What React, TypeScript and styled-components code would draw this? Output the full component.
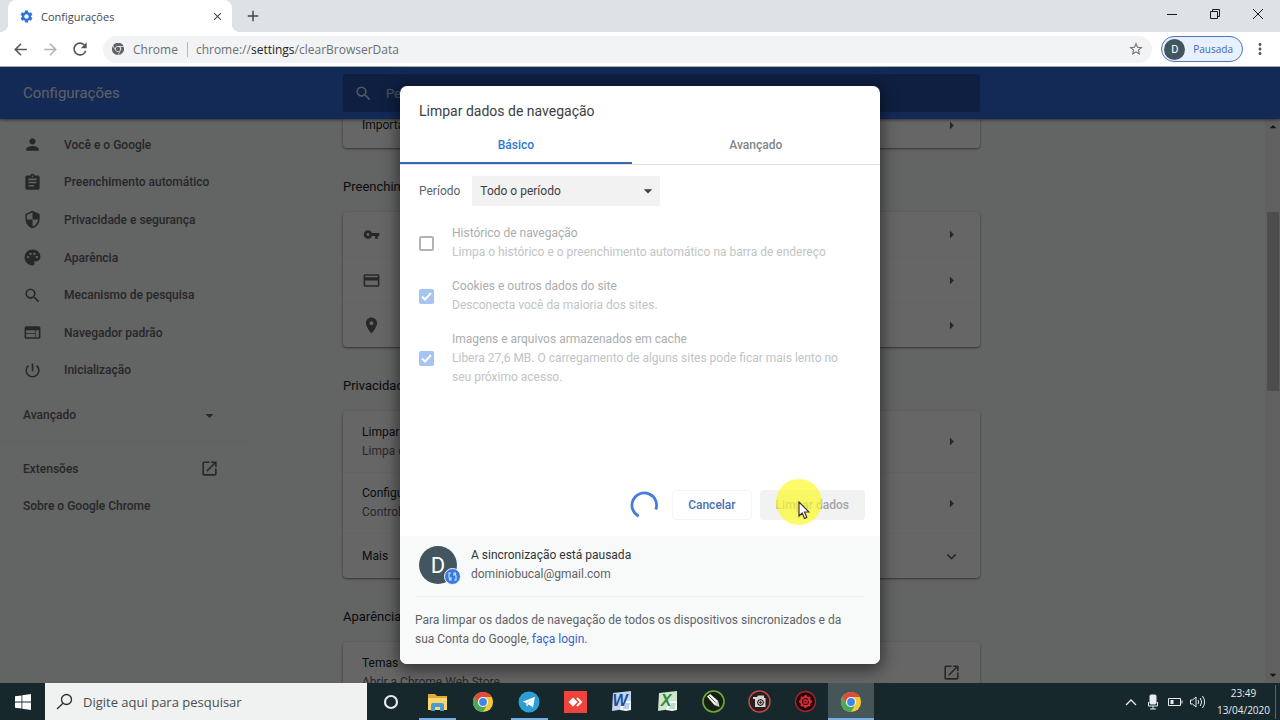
import React from "react";
import styled, { createGlobalStyle, css } from "styled-components";
import {
  MdAdd,
  MdArrowBack,
  MdArrowDropDown,
  MdArrowDropUp,
  MdArrowForward,
  MdArrowRight,
  MdAssignment,
  MdClose,
  MdCreditCard,
  MdExpandMore,
  MdMoreVert,
  MdOpenInNew,
  MdPalette,
  MdPerson,
  MdPlace,
  MdPowerSettingsNew,
  MdRefresh,
  MdSearch,
  MdSecurity,
  MdSettings,
  MdStarBorder,
  MdVpnKey,
  MdWeb,
} from "react-icons/md";

const systemFont = '"Segoe UI", "Open Sans", "Noto Sans", sans-serif';
const pageFont = 'Roboto, "Liberation Sans", sans-serif';

const GlobalStyle = createGlobalStyle`
  *, *::before, *::after { box-sizing: border-box; }
  body { margin: 0; background: #17272b; }
  button, input, select { font: inherit; color: inherit; }
  button { border: 0; padding: 0; background: none; }
  a { color: inherit; text-decoration: none; }
  h1, h2, p, ul { margin: 0; padding: 0; font-weight: inherit; font-size: inherit; }
  ul { list-style: none; }
  svg { display: block; flex: none; }
`;

const Desktop = styled.div`
  display: flex;
  flex-direction: column;
  height: 100vh;
  overflow: hidden;
  font-family: ${pageFont};
  font-size: 12px;
`;

/* ---------- browser frame ---------- */

const TabStrip = styled.header`
  display: flex;
  flex: none;
  height: 32px;
  padding-left: 8px;
  background: #dee1e5;
  font-family: ${systemFont};
  font-size: 11px;
  color: #45494d;
`;

const BrowserTab = styled.div`
  position: relative;
  display: flex;
  align-items: center;
  gap: 7px;
  width: 224px;
  padding: 0 8px 0 11px;
  border-radius: 8px 8px 0 0;
  background: #fff;

  &::before,
  &::after {
    content: "";
    position: absolute;
    bottom: 0;
    width: 8px;
    height: 8px;
  }
  &::before {
    right: 100%;
    background: radial-gradient(circle at 0 0, transparent 8px, #fff 8px);
  }
  &::after {
    left: 100%;
    background: radial-gradient(circle at 100% 0, transparent 8px, #fff 8px);
  }
`;

const TabTitle = styled.span`
  flex: 1;
`;

const IconButton = styled.button<{ $width?: number }>`
  display: flex;
  flex: none;
  align-items: center;
  justify-content: center;
  width: ${(p) => p.$width ?? 30}px;
  color: inherit;
`;

const WindowControls = styled.div`
  display: flex;
  height: 27px;
  margin-left: auto;
  padding-right: 1px;
  color: #1b1b1b;
`;

const Toolbar = styled.div`
  display: flex;
  flex: none;
  align-items: center;
  height: 35px;
  padding: 0 5px;
  border-bottom: 1px solid #a9adb3;
  background: #fff;
  font-family: ${systemFont};
  font-size: 12px;
  color: #55595d;
`;

const Omnibox = styled.div`
  display: flex;
  flex: 1;
  align-items: center;
  height: 27px;
  margin: 0 9px 0 8px;
  padding: 0 8px 0 9px;
  border-radius: 14px;
  background: #f1f3f4;
  color: #6b6f73;
`;

const SiteChip = styled.span`
  margin-left: 9px;
  padding-right: 9px;
  border-right: 1px solid #b5b8bb;
  line-height: 15px;
`;

const Address = styled.span`
  flex: 1;
  padding-left: 8px;

  b {
    font-weight: 400;
    color: #202124;
  }
`;

const ProfileChip = styled.button`
  display: flex;
  align-items: center;
  gap: 8px;
  height: 26px;
  margin-right: 2px;
  padding: 0 9px 0 2px;
  border: 1px solid #4c78b8;
  border-radius: 13px;
  background: #e8f0fd;
  font-size: 10px;
  color: #3b69b5;
`;

const Initial = styled.span<{ $size: number }>`
  display: flex;
  flex: none;
  align-items: center;
  justify-content: center;
  width: ${(p) => p.$size}px;
  height: ${(p) => p.$size}px;
  border-radius: 50%;
  background: #43565f;
  color: #fff;
  font-family: ${pageFont};
  font-size: ${(p) => (p.$size > 30 ? 22 : 11)}px;
`;

/* ---------- settings page ---------- */

const Page = styled.div`
  position: relative;
  display: flex;
  flex: 1;
  flex-direction: column;
  min-height: 0;
  overflow: hidden;
  background: #f8f9fa;
`;

const columns = css`
  display: grid;
  grid-template-columns: minmax(250px, 1fr) minmax(0, 637px) 285px;
`;

const PageHeader = styled.div`
  ${columns}
  flex: none;
  z-index: 1;
  align-items: center;
  height: 52px;
  padding-right: 15px;
  background: #3067d8;
  box-shadow: 0 1px 3px rgba(0, 0, 0, 0.5);
  color: #fff;
`;

const PageTitle = styled.h1`
  padding-left: 23px;
  font-size: 15px;
  opacity: 0.9;
`;

const SearchField = styled.label`
  display: flex;
  align-items: center;
  gap: 13px;
  height: 38px;
  padding: 0 11px;
  border-radius: 2px;
  background: rgba(0, 0, 0, 0.24);

  svg {
    opacity: 0.8;
  }
  input {
    flex: 1;
    min-width: 0;
    padding: 0;
    border: 0;
    outline: 0;
    background: none;
    font-size: 13px;
  }
  input::placeholder {
    color: #fff;
    opacity: 0.7;
  }
`;

const PageBody = styled.div`
  display: flex;
  flex: 1;
  min-height: 0;
`;

const PageColumns = styled.div`
  ${columns}
  flex: 1;
  overflow: hidden;
`;

const Sidebar = styled.nav`
  width: 250px;
  padding-top: 7px;
  font-weight: 500;
  color: #5f6368;
`;

const MenuList = styled.ul<{ $height?: number }>`
  display: flex;
  flex-direction: column;
  height: ${(p) => (p.$height ? `${p.$height}px` : "auto")};

  li {
    display: flex;
    flex: 1 0 auto;
  }
`;

const MenuLink = styled.a`
  display: flex;
  flex: 1;
  align-items: center;
  gap: 22px;
  min-height: 37px;
  padding-left: 23px;
`;

const MenuToggle = styled.button`
  display: flex;
  align-items: center;
  justify-content: space-between;
  width: 100%;
  height: 38px;
  margin: 7px 0;
  padding: 0 31px 0 23px;
  font-weight: 500;
`;

const MenuFooter = styled(MenuList)`
  padding-top: 8px;
  border-top: 1px solid #f0f1f3;

  ${MenuLink} {
    justify-content: space-between;
    min-height: 37px;
    padding-right: 31px;
  }
`;

const Main = styled.main`
  margin-top: -16px;
  color: #202124;
`;

const SectionTitle = styled.h2`
  display: flex;
  align-items: center;
  height: 64px;
  padding-top: 12px;
  font-size: 13px;
`;

const Card = styled.div`
  border-radius: 4px;
  background: #fff;
  box-shadow: 0 1px 2px rgba(60, 64, 67, 0.5), 0 1px 3px rgba(60, 64, 67, 0.2);
`;

const CardRow = styled.a<{ $tall?: boolean }>`
  display: flex;
  align-items: center;
  gap: 18px;
  height: ${(p) => (p.$tall ? 61 : 45)}px;
  padding: 0 19px;
  line-height: 19px;

  & + & {
    border-top: 1px solid #f7f7f8;
  }
  > svg {
    color: #5f6368;
  }
`;

const RowIcon = styled.span`
  display: flex;
  flex: 1;
  color: #5f6368;
`;

const IconSlot = styled.span`
  display: flex;
  justify-content: center;
  width: 19px;
`;

const RowText = styled.span`
  flex: 1;

  small {
    display: block;
    font-size: 12px;
    color: #5f6368;
  }
`;

const Scrollbar = styled.div`
  display: flex;
  flex-direction: column;
  align-items: center;
  justify-content: space-between;
  width: 15px;
  background: #f1f1f1;
  color: #303030;
`;

const ScrollTrack = styled.div`
  flex: 1;
  width: 12px;
  padding-top: 77px;
`;

const ScrollThumb = styled.div`
  height: 179px;
  background: #c1c1c1;
`;

/* ---------- dialog ---------- */

const Backdrop = styled.div`
  position: absolute;
  inset: 0;
  z-index: 2;
  display: flex;
  align-items: center;
  justify-content: center;
  background: rgba(0, 0, 0, 0.6);
`;

const Dialog = styled.section`
  width: 480px;
  overflow: hidden;
  border-radius: 7px;
  background: #fefffe;
  box-shadow: 0 4px 16px 2px rgba(0, 0, 0, 0.5);
  line-height: 19px;
  color: #5f6368;
`;

const DialogTitle = styled.h2`
  padding: 16px 19px 0;
  font-size: 14px;
  color: #3c4043;
`;

const TabBar = styled.div`
  display: flex;
  height: 44px;
  border-bottom: 1px solid #dcdedd;
`;

const DialogTab = styled.button<{ $active?: boolean }>`
  flex: 1 1 auto;
  padding: 8px 0 0;
  border-bottom: 2px solid ${(p) => (p.$active ? "#3868b4" : "transparent")};
  font-weight: 500;
  color: ${(p) => (p.$active ? "#2f78d8" : "#80868b")};
`;

const DialogBody = styled.div`
  min-height: 309px;
  padding: 11px 19px 0;
`;

const PeriodRow = styled.div`
  display: flex;
  align-items: center;
  gap: 12px;
  margin-bottom: 18px;
`;

const SelectBox = styled.span`
  position: relative;
  width: 188px;
  height: 30px;
  color: #3c4043;

  select {
    width: 100%;
    height: 100%;
    padding: 0 8px;
    border: 0;
    border-radius: 2px;
    appearance: none;
    background: #f1f2f1;
  }
  svg {
    position: absolute;
    top: 5px;
    right: 2px;
    pointer-events: none;
  }
`;

const OptionList = styled.div`
  display: flex;
  flex-direction: column;
  gap: 15px;
  padding-right: 15px;
`;

const Option = styled.label`
  display: flex;
  align-items: center;
  gap: 18px;
  color: #abadae;

  small {
    display: block;
    font-size: 12px;
    color: #c2c4c5;
  }
`;

const CheckSlot = styled.span`
  display: grid;
  flex: none;
  width: 15px;
  height: 15px;

  input,
  svg {
    grid-area: 1 / 1;
    width: 15px;
    height: 15px;
    margin: 0;
  }
  input {
    appearance: none;
    border: 2px solid #b2b4b4;
    border-radius: 2px;
  }
  input:checked {
    border: 0;
    background: #a6c3f1;
  }
`;

const Actions = styled.div`
  display: flex;
  align-items: center;
  justify-content: flex-end;
  padding: 16px 15px;
`;

const ActionButton = styled.button<{ $primary?: boolean }>`
  position: relative;
  height: 30px;
  margin-left: ${(p) => (p.$primary ? 8 : 14)}px;
  padding: 0 ${(p) => (p.$primary ? 16 : 15)}px;
  border: ${(p) => (p.$primary ? "0" : "1px solid #f4f6f6")};
  border-radius: 4px;
  background: ${(p) => (p.$primary ? "#f1f2f2" : "transparent")};
  font-weight: 500;
  color: ${(p) => (p.$primary ? "#a3a5a7" : "#4a70b4")};
`;

const ClickHalo = styled.span`
  position: absolute;
  top: -11px;
  left: 16px;
  width: 46px;
  height: 46px;
  border-radius: 50%;
  background: rgba(252, 250, 40, 0.7);

  svg {
    position: absolute;
    top: 22px;
    left: 22px;
  }
`;

const DialogFooter = styled.footer`
  padding: 10px 15px 15px;
  background: #f8faf9;

  p {
    padding-right: 10px;
  }
`;

const Account = styled.div`
  display: flex;
  align-items: center;
  gap: 14px;
  padding: 0 4px 12px;
  border-bottom: 1px solid #eceeed;
  margin-bottom: 14px;

  strong {
    display: block;
    font-weight: 400;
    color: #303336;
  }
`;

const Avatar = styled.span`
  position: relative;

  > svg {
    position: absolute;
    right: -4px;
    bottom: -1px;
  }
`;

const LoginLink = styled.a`
  color: #3a5fd0;
`;

/* ---------- taskbar ---------- */

const Taskbar = styled.footer`
  display: flex;
  flex: none;
  height: 37px;
  background: #17282c;
  font-family: ${systemFont};
  color: #e8ecec;
`;

const TaskSearch = styled.label`
  display: flex;
  align-items: center;
  gap: 10px;
  width: 322px;
  padding: 0 11px;
  background: #f0f2f1;
  color: #3c3f40;

  input {
    flex: 1;
    min-width: 0;
    padding: 0;
    border: 0;
    outline: 0;
    background: none;
    font-size: 13px;
  }
  input::placeholder {
    color: #4b4e4f;
    opacity: 1;
  }
`;

const TaskList = styled.div`
  display: flex;
  padding-left: 1px;
`;

const TaskButton = styled.button<{ $open?: boolean; $active?: boolean }>`
  position: relative;
  display: flex;
  align-items: center;
  justify-content: center;
  width: 46px;
  background: ${(p) => (p.$active ? "#465557" : "transparent")};

  &::after {
    content: "";
    position: absolute;
    bottom: 0;
    left: ${(p) => (p.$active ? 0 : 5)}px;
    right: ${(p) => (p.$active ? 0 : 4)}px;
    height: 2px;
    background: ${(p) => (p.$open ? "#78aee4" : "transparent")};
  }
`;

const Tray = styled.div`
  display: flex;
  align-items: center;
  margin-left: auto;
  padding-right: 4px;
`;

const Clock = styled.time`
  padding: 0 5px 0 9px;
  border-right: 1px solid #5c696c;
  font-size: 10px;
  line-height: 17px;
  text-align: center;
  white-space: pre-line;
`;

/* ---------- drawings ---------- */

const ChromeMono = () => (
  <svg width="12" height="12" viewBox="0 0 24 24" fill="#5f6368">
    <path d="M12 6h11A12 12 0 0 0 2 5.200l4.300 7.200A6 6 0 0 1 12 6z" />
    <path d="M1.200 6.500A12 12 0 0 0 11 24l4.300-7.500a6 6 0 0 1-8.300-1.500z" />
    <path d="M16.500 7.500a6 6 0 0 1 .7 7.500L12.500 24A12 12 0 0 0 23.200 7.500z" />
    <circle cx="12" cy="12" r="4.500" />
  </svg>
);

const ChromeLogo = () => (
  <svg width="22" height="22" viewBox="0 0 48 48">
    <circle cx="24" cy="24" r="22" fill="#f6c935" />
    <path d="M4.950 13A22 22 0 0 1 43.050 13H24a11 11 0 0 0-9.500 16.500z" fill="#dd4b3e" />
    <path d="M4.950 13A22 22 0 0 0 24 46l9.500-16.500a11 11 0 0 1-19 0z" fill="#4ba85a" />
    <circle cx="24" cy="24" r="11" fill="#f4f4f4" />
    <circle cx="24" cy="24" r="8.500" fill="#4285e8" />
  </svg>
);

const WindowsLogo = () => (
  <svg width="16" height="16" viewBox="0 0 16 16" fill="#fff">
    <path d="M0 2.300 6.500 1.400V7.600H0zM7.300 1.300 16 0V7.600H7.300zM0 8.400H6.500V14.600L0 13.700zM7.300 8.400H16V16L7.300 14.700z" />
  </svg>
);

const ExplorerIcon = () => (
  <svg width="21" height="18" viewBox="0 0 21 18">
    <path d="M1 1h7l2 2h10v14H1z" fill="#e0a83a" />
    <path d="M1 5h19v12H1z" fill="#fbd76c" />
    <path d="M4 18v-6q0-2 2-2h9q2 0 2 2v6h-4v-4H8v4z" fill="#4a9bd0" />
  </svg>
);

const TelegramIcon = () => (
  <svg width="22" height="22" viewBox="0 0 22 22">
    <circle cx="11" cy="11" r="10.500" fill="#2c9ed6" />
    <path d="M4.500 10.800 17 5.700 15 16.500l-4.200-3-2 2-.5-3.500z" fill="#fff" />
    <path d="m8.300 12 6-4.300-4.700 5-.8 2.800z" fill="#c5dcea" />
  </svg>
);

const AnyDeskIcon = () => (
  <svg width="23" height="22" viewBox="0 0 23 22">
    <path d="M0 0h23v22H0z" fill="#ef443b" />
    <path d="m9 6.500 4.500 4.500L9 15.500 4.500 11z" fill="#fff" />
    <path d="m13 7 4 4-4 4" fill="none" stroke="#fff" strokeWidth="2" />
  </svg>
);

const OfficeIcon = ({ letter, color, tint }: { letter: string; color: string; tint: string }) => (
  <svg width="21" height="21" viewBox="0 0 21 21">
    <path d="M2 2 20 0v17L1 20z" fill={tint} />
    <path d="M11 10h9v9l-5 1-6-1z" fill="#f4f7fb" />
    <path d="M14 13h5M13 15h5M12 17h6" stroke={color} strokeOpacity=".5" />
    <text x="9" y="15" textAnchor="middle" fontFamily="Liberation Sans, sans-serif" fontWeight="700" fontStyle="italic" fontSize="16" fill={color}>
      {letter}
    </text>
  </svg>
);

const PenIcon = () => (
  <svg width="23" height="23" viewBox="0 0 23 23">
    <circle cx="11.500" cy="11.500" r="10.500" fill="#15200f" stroke="#6cab35" strokeWidth="1.600" />
    <path d="m5 6.500 3.200-2.500 8 7-3.700 4.300z" fill="#f4f4f4" />
    <path d="m16.200 11 1.300 6-5.500-2z" fill="#cfd3cf" />
    <path d="m7 6 6.500 6.500" stroke="#55604f" />
  </svg>
);

const CameraIcon = () => (
  <svg width="23" height="23" viewBox="0 0 23 23" fill="none">
    <circle cx="11.500" cy="11.500" r="10.500" fill="#2c1c20" stroke="#c24a4a" strokeWidth="1.500" />
    <path d="M5 9V7h4l1-1.500h6V8h1.500v9H7V9z" fill="#d8d4d4" />
    <circle cx="12.500" cy="12.500" r="4" fill="#2c1c20" stroke="#f4f4f4" />
    <circle cx="12.500" cy="12.500" r="1.800" stroke="#f4f4f4" />
  </svg>
);

const RecorderIcon = () => (
  <svg width="23" height="23" viewBox="0 0 23 23" fill="none">
    <circle cx="11.500" cy="11.500" r="10" fill="#24080b" stroke="#a8232a" strokeWidth="1.300" />
    <circle cx="11.500" cy="11.500" r="4.500" stroke="#dc2d33" strokeWidth="2" />
    <path
      d="M11.500 5v2M11.500 16v2M5 11.500h2M16 11.500h2M7 7l1.500 1.500M14.500 14.500 16 16M16 7l-1.500 1.500M7 16l1.500-1.500"
      stroke="#dc2d33"
      strokeWidth="2"
    />
    <path d="M13 10h-3v3h3v-2l3-2" stroke="#dc2d33" strokeWidth="1.300" />
  </svg>
);

const PointerIcon = () => (
  <svg width="12" height="19" viewBox="0 0 12 19">
    <path d="M1 1v14l3.200-3 2.300 5.500 2.300-1L6.500 11H11z" fill="#fff" stroke="#3a3430" strokeWidth="1.200" />
  </svg>
);

const Spinner = () => (
  <svg width="28" height="28" viewBox="0 0 28 28" role="img" aria-label="Limpando">
    <path d="M8.700 25.200A12.300 12.300 0 1 1 25.800 18.500" fill="none" stroke="#4a7bdc" strokeWidth="2.800" />
  </svg>
);

const SyncBadge = () => (
  <svg width="17" height="17" viewBox="0 0 17 17" fill="none">
    <circle cx="8.500" cy="8.500" r="8" fill="#3a7be0" stroke="#f4f8fb" />
    <path d="M7 5H5v4q0 2 2 3M5 12h2V9M10 12h2V8q0-2-2-3M12 5h-2v3" stroke="#cfe0f8" strokeWidth="1.100" />
  </svg>
);

const CheckMark = () => (
  <svg viewBox="0 0 15 15">
    <path d="m3 7.500 3 3 6-6.500" fill="none" stroke="#fff" strokeWidth="2" />
  </svg>
);

/* ---------- content ---------- */

const menu = [
  { icon: MdPerson, label: "Você e o Google" },
  { icon: MdAssignment, label: "Preenchimento automático" },
  { icon: MdSecurity, label: "Privacidade e segurança" },
  { icon: MdPalette, label: "Aparência" },
  { icon: MdSearch, label: "Mecanismo de pesquisa" },
  { icon: MdWeb, label: "Navegador padrão" },
  { icon: MdPowerSettingsNew, label: "Inicialização" },
];

const autofill = [
  { icon: MdVpnKey, size: 17, label: "Senhas" },
  { icon: MdCreditCard, size: 19, label: "Formas de pagamento" },
  { icon: MdPlace, size: 19, label: "Endereços e mais" },
];

const options = [
  {
    title: "Histórico de navegação",
    detail: "Limpa o histórico e o preenchimento automático na barra de endereço",
    checked: false,
  },
  { title: "Cookies e outros dados do site", detail: "Desconecta você da maioria dos sites.", checked: true },
  {
    title: "Imagens e arquivos armazenados em cache",
    detail: "Libera 27,6 MB. O carregamento de alguns sites pode ficar mais lento no seu próximo acesso.",
    checked: true,
  },
];

const Browser = () => (
  <>
    <TabStrip>
      <BrowserTab>
        <MdSettings size={15} color="#2f72dc" />
        <TabTitle>Configurações</TabTitle>
        <IconButton $width={14} aria-label="Fechar guia">
          <MdClose size={13} />
        </IconButton>
      </BrowserTab>
      <IconButton $width={42} aria-label="Nova guia">
        <MdAdd size={18} />
      </IconButton>
      <WindowControls>
        <IconButton $width={43} aria-label="Minimizar">
          <svg width="10" height="10" viewBox="0 0 10 10" stroke="currentColor">
            <path d="M0 5.500h10" />
          </svg>
        </IconButton>
        <IconButton $width={43} aria-label="Restaurar">
          <svg width="10" height="10" viewBox="0 0 10 10" fill="none" stroke="currentColor">
            <path d="M.5 2.500h7v7h-7zM2.500 2.500v-2h7v7h-2" />
          </svg>
        </IconButton>
        <IconButton $width={43} aria-label="Fechar">
          <svg width="10" height="10" viewBox="0 0 10 10" stroke="currentColor">
            <path d="m0 0 10 10M10 0 0 10" />
          </svg>
        </IconButton>
      </WindowControls>
    </TabStrip>
    <Toolbar>
      <IconButton aria-label="Voltar">
        <MdArrowBack size={19} />
      </IconButton>
      <IconButton aria-label="Avançar">
        <MdArrowForward size={19} opacity={0.45} />
      </IconButton>
      <IconButton aria-label="Recarregar">
        <MdRefresh size={20} />
      </IconButton>
      <Omnibox>
        <ChromeMono />
        <SiteChip>Chrome</SiteChip>
        <Address>
          chrome://<b>settings</b>/clearBrowserData
        </Address>
        <IconButton $width={16} aria-label="Adicionar aos favoritos">
          <MdStarBorder size={16} />
        </IconButton>
      </Omnibox>
      <ProfileChip>
        <Initial $size={21}>D</Initial>
        Pausada
      </ProfileChip>
      <IconButton aria-label="Menu">
        <MdMoreVert size={18} />
      </IconButton>
    </Toolbar>
  </>
);

const SettingsPage = () => (
  <>
    <PageHeader>
      <PageTitle>Configurações</PageTitle>
      <SearchField>
        <MdSearch size={19} />
        <input aria-label="Pesquisar" placeholder="Pesquisar nas configurações" />
      </SearchField>
    </PageHeader>
    <PageBody>
      <PageColumns>
        <Sidebar>
          <MenuList $height={263}>
            {menu.map(({ icon: Icon, label }) => (
              <li key={label}>
                <MenuLink href="#">
                  <Icon size={19} />
                  {label}
                </MenuLink>
              </li>
            ))}
          </MenuList>
          <MenuToggle>
            Avançado
            <MdArrowDropDown size={19} />
          </MenuToggle>
          <MenuFooter>
            <li>
              <MenuLink href="#">
                Extensões
                <MdOpenInNew size={19} />
              </MenuLink>
            </li>
            <li>
              <MenuLink href="#">Sobre o Google Chrome</MenuLink>
            </li>
          </MenuFooter>
        </Sidebar>
        <Main>
          <Card>
            <CardRow href="#">
              <RowText>Importar favoritos</RowText>
              <MdArrowRight size={19} />
            </CardRow>
          </Card>
          <SectionTitle>Preenchimento automático</SectionTitle>
          <Card>
            {autofill.map(({ icon: Icon, size, label }) => (
              <CardRow key={label} href="#" aria-label={label}>
                <RowIcon>
                  <IconSlot>
                    <Icon size={size} />
                  </IconSlot>
                </RowIcon>
                <MdArrowRight size={19} />
              </CardRow>
            ))}
          </Card>
          <SectionTitle>Privacidade e segurança</SectionTitle>
          <Card>
            <CardRow href="#" $tall>
              <RowText>
                Limpar dados de navegação
                <small>Limpa o histórico, os cookies, o cache e muito mais</small>
              </RowText>
              <MdArrowRight size={19} />
            </CardRow>
            <CardRow href="#" $tall>
              <RowText>
                Configurações do site
                <small>Controla quais informações os sites podem usar</small>
              </RowText>
              <MdArrowRight size={19} />
            </CardRow>
            <CardRow href="#">
              <RowText>Mais</RowText>
              <MdExpandMore size={19} />
            </CardRow>
          </Card>
          <SectionTitle>Aparência</SectionTitle>
          <Card>
            <CardRow href="#" $tall>
              <RowText>
                Temas
                <small>Abrir a Chrome Web Store</small>
              </RowText>
              <MdOpenInNew size={19} />
            </CardRow>
          </Card>
        </Main>
      </PageColumns>
      <Scrollbar>
        <MdArrowDropUp size={16} />
        <ScrollTrack>
          <ScrollThumb />
        </ScrollTrack>
        <MdArrowDropDown size={16} />
      </Scrollbar>
    </PageBody>
  </>
);

const ClearDataDialog = () => (
  <Backdrop>
    <Dialog role="dialog" aria-labelledby="dialog-title">
      <DialogTitle id="dialog-title">Limpar dados de navegação</DialogTitle>
      <TabBar role="tablist">
        <DialogTab role="tab" aria-selected $active>
          Básico
        </DialogTab>
        <DialogTab role="tab" aria-selected={false}>
          Avançado
        </DialogTab>
      </TabBar>
      <DialogBody>
        <PeriodRow>
          <label htmlFor="period">Período</label>
          <SelectBox>
            <select id="period" defaultValue="all">
              <option value="all">Todo o período</option>
            </select>
            <MdArrowDropDown size={20} />
          </SelectBox>
        </PeriodRow>
        <OptionList>
          {options.map((o) => (
            <Option key={o.title}>
              <CheckSlot>
                <input type="checkbox" defaultChecked={o.checked} disabled />
                {o.checked && <CheckMark />}
              </CheckSlot>
              <span>
                {o.title}
                <small>{o.detail}</small>
              </span>
            </Option>
          ))}
        </OptionList>
      </DialogBody>
      <Actions>
        <Spinner />
        <ActionButton>Cancelar</ActionButton>
        <ActionButton $primary>
          Limpar dados
          <ClickHalo>
            <PointerIcon />
          </ClickHalo>
        </ActionButton>
      </Actions>
      <DialogFooter>
        <Account>
          <Avatar>
            <Initial $size={38}>D</Initial>
            <SyncBadge />
          </Avatar>
          <span>
            <strong>A sincronização está pausada</strong>
            dominiobucal@gmail.com
          </span>
        </Account>
        <p>
          Para limpar os dados de navegação de todos os dispositivos sincronizados e da sua Conta do Google,{" "}
          <LoginLink href="#">faça login.</LoginLink>
        </p>
      </DialogFooter>
    </Dialog>
  </Backdrop>
);

const SystemTaskbar = () => (
  <Taskbar>
    <IconButton $width={45} aria-label="Iniciar">
      <WindowsLogo />
    </IconButton>
    <TaskSearch>
      <svg width="17" height="17" viewBox="0 0 17 17" fill="none" stroke="#2c2f30" strokeWidth="1.300">
        <circle cx="10.500" cy="6.500" r="5" />
        <path d="M7 10.200 1 16" />
      </svg>
      <input aria-label="Pesquisar no Windows" placeholder="Digite aqui para pesquisar" />
    </TaskSearch>
    <TaskList>
      <TaskButton aria-label="Cortana">
        <svg width="16" height="16" viewBox="0 0 16 16">
          <circle cx="8" cy="8" r="6" fill="none" stroke="#e4e9ee" strokeWidth="2.200" />
        </svg>
      </TaskButton>
      <TaskButton aria-label="Explorador de Arquivos" $open>
        <ExplorerIcon />
      </TaskButton>
      <TaskButton aria-label="Google Chrome">
        <ChromeLogo />
      </TaskButton>
      <TaskButton aria-label="Telegram" $open>
        <TelegramIcon />
      </TaskButton>
      <TaskButton aria-label="AnyDesk">
        <AnyDeskIcon />
      </TaskButton>
      <TaskButton aria-label="Word">
        <OfficeIcon letter="W" color="#1f4e9e" tint="#c3d6ee" />
      </TaskButton>
      <TaskButton aria-label="Excel">
        <OfficeIcon letter="X" color="#2f8a3c" tint="#cfe6cc" />
      </TaskButton>
      <TaskButton aria-label="CorelDRAW">
        <PenIcon />
      </TaskButton>
      <TaskButton aria-label="Captura de tela">
        <CameraIcon />
      </TaskButton>
      <TaskButton aria-label="Gravador">
        <RecorderIcon />
      </TaskButton>
      <TaskButton aria-label="Configurações - Google Chrome" $open $active>
        <ChromeLogo />
      </TaskButton>
    </TaskList>
    <Tray>
      <IconButton $width={22} aria-label="Mostrar ícones ocultos">
        <svg width="12" height="8" viewBox="0 0 12 8" fill="none" stroke="currentColor" strokeWidth="1.300">
          <path d="m1 7 5-5 5 5" />
        </svg>
      </IconButton>
      <IconButton $width={22} aria-label="Microfone">
        <svg width="12" height="16" viewBox="0 0 12 16" fill="none" stroke="currentColor">
          <rect x="3" y="1" width="6" height="9" rx="1" fill="currentColor" />
          <path d="M1.500 8v4h9V8M6 12v3M3 15h6" />
        </svg>
      </IconButton>
      <IconButton $width={24} aria-label="Bateria">
        <svg width="15" height="10" viewBox="0 0 15 10" fill="none" stroke="currentColor">
          <path d="M.5 1.500h12v7H.5zM14 3.500v3" />
          <path d="M2.500 3h3v4h-3z" fill="currentColor" stroke="none" />
        </svg>
      </IconButton>
      <IconButton $width={20} aria-label="Volume">
        <svg width="16" height="14" viewBox="0 0 16 14" fill="none" stroke="currentColor">
          <path d="M.5 5h2L6 2v10L2.500 9h-2z" />
          <path d="M8 5q1.500 2 0 4M10.200 3q3 4 0 8M12.400 1q4.500 6 0 12" />
        </svg>
      </IconButton>
      <Clock>{"23:49\n13/04/2020"}</Clock>
    </Tray>
  </Taskbar>
);

export default function App() {
  return (
    <Desktop>
      <GlobalStyle />
      <Browser />
      <Page>
        <SettingsPage />
        <ClearDataDialog />
      </Page>
      <SystemTaskbar />
    </Desktop>
  );
}
